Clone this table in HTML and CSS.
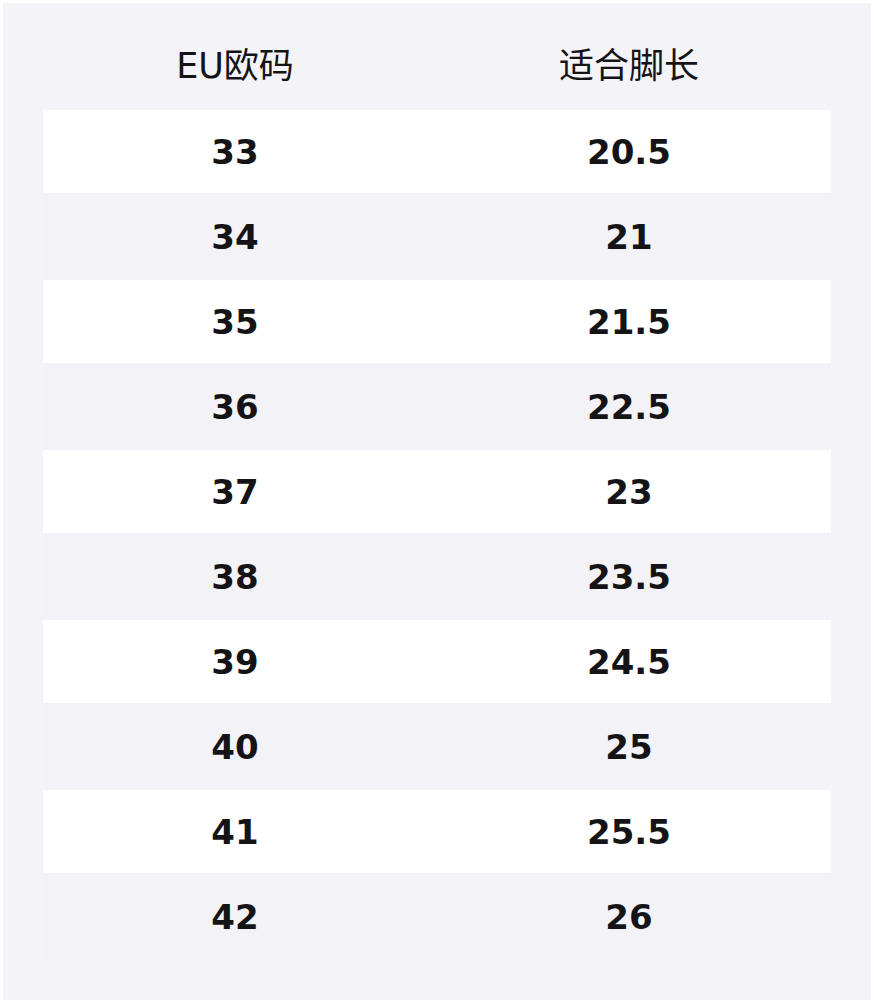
FILE: index.html
```html
<!DOCTYPE html>
<html lang="zh">
<head>
<meta charset="utf-8">
<title>尺码表</title>
<link rel="stylesheet" href="styles.css">
</head>
<body>
<div class="panel">
  <div class="row head">
    <div class="cell">EU欧码</div>
    <div class="cell">适合脚长</div>
  </div>
  <div class="row odd"><div class="cell">33</div><div class="cell">20.5</div></div>
  <div class="row even"><div class="cell">34</div><div class="cell">21</div></div>
  <div class="row odd"><div class="cell">35</div><div class="cell">21.5</div></div>
  <div class="row even"><div class="cell">36</div><div class="cell">22.5</div></div>
  <div class="row odd"><div class="cell">37</div><div class="cell">23</div></div>
  <div class="row even"><div class="cell">38</div><div class="cell">23.5</div></div>
  <div class="row odd"><div class="cell">39</div><div class="cell">24.5</div></div>
  <div class="row even"><div class="cell">40</div><div class="cell">25</div></div>
  <div class="row odd"><div class="cell">41</div><div class="cell">25.5</div></div>
  <div class="row even"><div class="cell">42</div><div class="cell">26</div></div>
</div>
</body>
</html>
```
FILE: styles.css
```css
html, body {
  margin: 0;
  background: #ffffff;
}
body {
  padding: 3px;
  font-family: "DejaVu Sans", "Noto Sans CJK SC", sans-serif;
  color: #141417;
}
.panel {
  background: #f3f3f8;
  padding: 20px 40px 40px 40px;
  height: 997px;
  box-sizing: border-box;
}
.row {
  display: grid;
  grid-template-columns: 384px 1fr;
  align-items: center;
  text-align: center;
}
.row.head {
  height: 87px;
  font-size: 35px;
  font-weight: normal;
}
.row.odd {
  height: 83px;
  background: #ffffff;
}
.row.even {
  height: 87px;
  background: #f2f2f7;
}
.row.odd, .row.even {
  font-size: 34px;
  font-weight: bold;
}
.cell {
  line-height: 1;
}
```
